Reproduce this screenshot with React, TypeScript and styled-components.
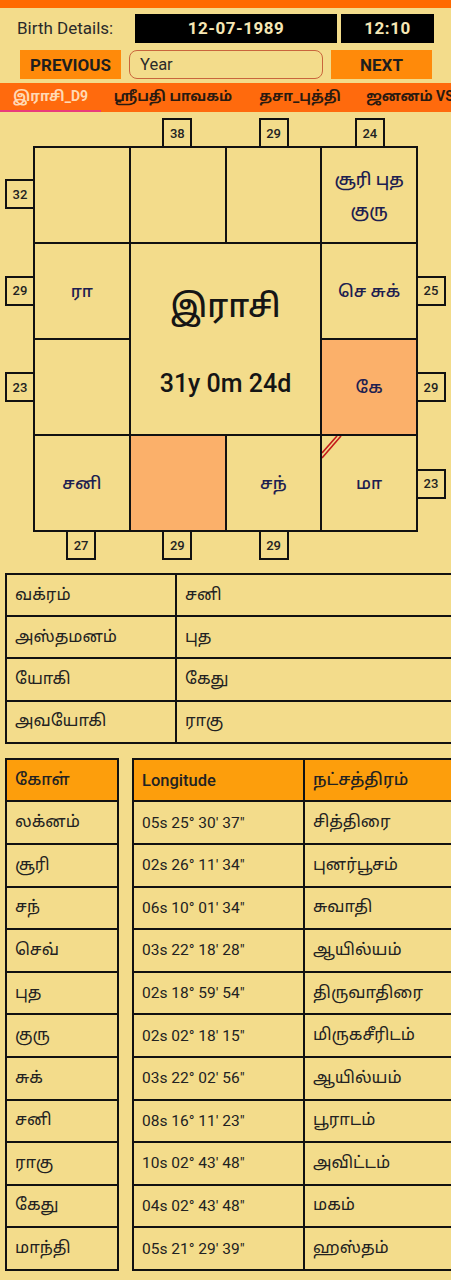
import styled, { createGlobalStyle } from "styled-components";

const GlobalStyle = createGlobalStyle`
  html, body {
    margin: 0;
    padding: 0;
    background: #f3dc8b;
    overflow-x: hidden;
  }
  body {
    font-family: Roboto, "Noto Sans", "Noto Sans Tamil", sans-serif;
    color: #1e1e1e;
  }
`;

const Page = styled.div`
  width: 451px;
  min-height: 1280px;
  background: #f3dc8b;
  overflow: hidden;
`;

const TopStrip = styled.div`
  height: 8px;
  background: #ff6a00;
`;

const BirthRow = styled.div`
  display: flex;
  align-items: center;
  height: 30px;
  margin-top: 5px;
`;

const Label = styled.span`
  width: 118px;
  padding-left: 17px;
  font-size: 17px;
  color: #2a2a2a;
`;

const DarkBox = styled.div<{ $w: number }>`
  width: ${(p) => p.$w}px;
  height: 29px;
  margin-right: 4px;
  background: #000;
  color: #f6e7b5;
  font-weight: 700;
  font-size: 17px;
  letter-spacing: 0.5px;
  display: flex;
  align-items: center;
  justify-content: center;
`;

const NavRow = styled.div`
  display: flex;
  align-items: center;
  gap: 8px;
  height: 29px;
  margin-top: 7px;
  padding-left: 20px;
`;

const NavButton = styled.button`
  width: 101px;
  height: 29px;
  border: none;
  background: #ff8a0a;
  color: #1e1e1e;
  font-family: Roboto, sans-serif;
  font-weight: 700;
  font-size: 17px;
  padding: 0;
`;

const YearInput = styled.div`
  box-sizing: border-box;
  width: 194px;
  height: 29px;
  border: 1.5px solid #c9653c;
  border-radius: 8px;
  padding-left: 10px;
  display: flex;
  align-items: center;
  font-size: 16.5px;
  color: #2a2a2a;
`;

const TabBar = styled.div`
  display: flex;
  height: 29px;
  margin-top: 4px;
  background: #ff6a0d;
  white-space: nowrap;
  overflow: hidden;
`;

const Tab = styled.div<{ $active?: boolean; $w: number }>`
  flex: 0 0 ${(p) => p.$w}px;
  display: flex;
  align-items: center;
  justify-content: center;
  font-size: 14px;
  font-weight: 700;
  color: ${(p) => (p.$active ? "#ffd9b4" : "#2a1a10")};
  border-bottom: 2px solid ${(p) => (p.$active ? "#ea3b7c" : "transparent")};
  box-sizing: border-box;
`;

const ChartWrap = styled.div`
  display: grid;
  grid-template-columns: 33px repeat(4, 96.25px) 33px;
  grid-template-rows: 28px repeat(4, 96.5px) 28px;
  margin-top: 6px;
`;

const Board = styled.div`
  grid-column: 2 / 6;
  grid-row: 2 / 6;
  display: grid;
  grid-template-columns: repeat(4, 1fr);
  grid-template-rows: repeat(4, 1fr);
  gap: 2px;
  background: #111;
  border: 2px solid #111;
`;

const House = styled.div<{ $hl?: boolean }>`
  position: relative;
  background: ${(p) => (p.$hl ? "#fbb06a" : "#f3dc8b")};
  display: flex;
  flex-direction: column;
  align-items: center;
  justify-content: center;
  color: #1d2050;
  font-size: 17px;
  font-weight: 500;
  line-height: 31px;
  text-align: center;
`;

const Center = styled.div`
  grid-column: 2 / 4;
  grid-row: 2 / 4;
  background: #f3dc8b;
  display: flex;
  flex-direction: column;
  align-items: center;
  justify-content: center;
  gap: 40px;
  padding-top: 6px;
  color: #151515;
`;

const RasiTitle = styled.div`
  font-size: 32px;
  font-weight: 500;
`;

const Age = styled.div`
  font-size: 25px;
  font-weight: 500;
`;

const Marks = styled.svg`
  position: absolute;
  left: 0;
  top: 0;
`;

const Bindu = styled.div<{ $side: "top" | "bottom" | "left" | "right" }>`
  box-sizing: border-box;
  width: 30px;
  height: 30px;
  border: 2px solid #111;
  background: #f3dc8b;
  display: flex;
  align-items: center;
  justify-content: center;
  font-size: 13px;
  font-weight: 500;
  color: #222;
  justify-self: ${(p) =>
    p.$side === "left" ? "end" : p.$side === "right" ? "start" : "center"};
  align-self: ${(p) =>
    p.$side === "top" ? "end" : p.$side === "bottom" ? "start" : "center"};
  margin: ${(p) =>
    p.$side === "top"
      ? "0 0 -2px 0"
      : p.$side === "bottom"
      ? "-2px 0 0 0"
      : p.$side === "left"
      ? "0 -2px 0 0"
      : "0 0 0 -2px"};
  z-index: 1;
`;

const InfoTable = styled.table`
  border-collapse: collapse;
  margin: 13px 0 0 5px;
  width: 470px;
  table-layout: fixed;

  td {
    border: 2px solid #111;
    height: 40.2px;
    padding: 0 8px;
    font-size: 16.5px;
    color: #222;
  }
`;

const PlanetArea = styled.div`
  display: flex;
  gap: 13px;
  margin: 14px 0 0 5px;
`;

const DataTable = styled.table<{ $w: number }>`
  border-collapse: collapse;
  width: ${(p) => p.$w}px;
  flex: 0 0 ${(p) => p.$w}px;
  table-layout: fixed;

  th,
  td {
    border: 2px solid #111;
    height: 40.6px;
    padding: 0 8px;
    text-align: left;
    font-size: 16.5px;
    color: #222;
  }
  th {
    background: #fd9e0c;
    font-weight: 500;
  }
`;

const Mono = styled.td`
  font-family: Roboto, sans-serif;
  font-size: 15.5px !important;
`;

const bindus: { side: "top" | "bottom" | "left" | "right"; r: number; c: number; v: number }[] = [
  { side: "top", r: 1, c: 3, v: 38 },
  { side: "top", r: 1, c: 4, v: 29 },
  { side: "top", r: 1, c: 5, v: 24 },
  { side: "left", r: 2, c: 1, v: 32 },
  { side: "left", r: 3, c: 1, v: 29 },
  { side: "left", r: 4, c: 1, v: 23 },
  { side: "right", r: 3, c: 6, v: 25 },
  { side: "right", r: 4, c: 6, v: 29 },
  { side: "right", r: 5, c: 6, v: 23 },
  { side: "bottom", r: 6, c: 2, v: 27 },
  { side: "bottom", r: 6, c: 3, v: 29 },
  { side: "bottom", r: 6, c: 4, v: 29 },
];

const info = [
  ["வக்ரம்", "சனி"],
  ["அஸ்தமனம்", "புத"],
  ["யோகி", "கேது"],
  ["அவயோகி", "ராகு"],
];

const planets = [
  ["லக்னம்", "05s 25° 30' 37\"", "சித்திரை"],
  ["சூரி", "02s 26° 11' 34\"", "புனர்பூசம்"],
  ["சந்", "06s 10° 01' 34\"", "சுவாதி"],
  ["செவ்", "03s 22° 18' 28\"", "ஆயில்யம்"],
  ["புத", "02s 18° 59' 54\"", "திருவாதிரை"],
  ["குரு", "02s 02° 18' 15\"", "மிருகசீரிடம்"],
  ["சுக்", "03s 22° 02' 56\"", "ஆயில்யம்"],
  ["சனி", "08s 16° 11' 23\"", "பூராடம்"],
  ["ராகு", "10s 02° 43' 48\"", "அவிட்டம்"],
  ["கேது", "04s 02° 43' 48\"", "மகம்"],
  ["மாந்தி", "05s 21° 29' 39\"", "ஹஸ்தம்"],
];

export default function App() {
  return (
    <Page>
      <GlobalStyle />
      <TopStrip />
      <BirthRow>
        <Label>Birth Details:</Label>
        <DarkBox $w={202}>12-07-1989</DarkBox>
        <DarkBox $w={93}>12:10</DarkBox>
      </BirthRow>
      <NavRow>
        <NavButton>PREVIOUS</NavButton>
        <YearInput>Year</YearInput>
        <NavButton>NEXT</NavButton>
      </NavRow>
      <TabBar>
        <Tab $active $w={101}>இராசி_D9</Tab>
        <Tab $w={144}>ஸ்ரீபதி பாவகம்</Tab>
        <Tab $w={110}>தசா_புத்தி</Tab>
        <Tab $w={110}>ஜனனம் VS</Tab>
      </TabBar>
      <ChartWrap>
        <Board>
          <House />
          <House />
          <House />
          <House>
            <span>சூரி புத</span>
            <span>குரு</span>
          </House>
          <House>ரா</House>
          <Center>
            <RasiTitle>இராசி</RasiTitle>
            <Age>31y 0m 24d</Age>
          </Center>
          <House>செ சுக்</House>
          <House />
          <House $hl>கே</House>
          <House>சனி</House>
          <House $hl />
          <House>சந்</House>
          <House>
            <Marks width="24" height="24" viewBox="0 0 24 24">
              <line x1="0" y1="17" x2="15" y2="0" stroke="#c41a1a" strokeWidth="1.6" />
              <line x1="0" y1="22" x2="19" y2="0" stroke="#c41a1a" strokeWidth="1.6" />
            </Marks>
            மா
          </House>
        </Board>
        {bindus.map((b, i) => (
          <Bindu key={i} $side={b.side} style={{ gridRow: b.r, gridColumn: b.c }}>
            {b.v}
          </Bindu>
        ))}
      </ChartWrap>
      <InfoTable>
        <colgroup>
          <col style={{ width: 170 }} />
          <col />
        </colgroup>
        <tbody>
          {info.map(([k, v]) => (
            <tr key={k}>
              <td>{k}</td>
              <td>{v}</td>
            </tr>
          ))}
        </tbody>
      </InfoTable>
      <PlanetArea>
        <DataTable $w={114}>
          <thead>
            <tr>
              <th>கோள்</th>
            </tr>
          </thead>
          <tbody>
            {planets.map((p) => (
              <tr key={p[0]}>
                <td>{p[0]}</td>
              </tr>
            ))}
          </tbody>
        </DataTable>
        <DataTable $w={335}>
          <colgroup>
            <col style={{ width: 171 }} />
            <col />
          </colgroup>
          <thead>
            <tr>
              <th>Longitude</th>
              <th>நட்சத்திரம்</th>
            </tr>
          </thead>
          <tbody>
            {planets.map((p) => (
              <tr key={p[0]}>
                <Mono>{p[1]}</Mono>
                <td>{p[2]}</td>
              </tr>
            ))}
          </tbody>
        </DataTable>
      </PlanetArea>
    </Page>
  );
}
